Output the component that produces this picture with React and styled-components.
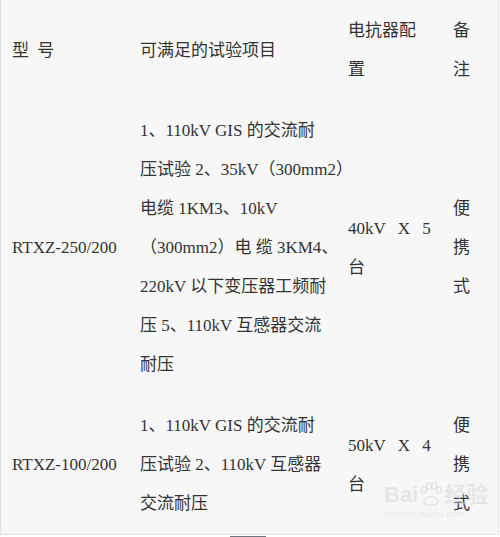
import React from "react";
import styled, { createGlobalStyle } from "styled-components";

const GlobalStyle = createGlobalStyle`
  html, body {
    margin: 0;
    padding: 0;
    background: #ffffff;
  }
`;

const Page = styled.div`
  width: 500px;
`;

const Panel = styled.div`
  position: relative;
  width: 497px;
  background: #f7f7f7;
  border-left: 1px solid #e2e2e2;
  border-right: 1px solid #e2e2e2;
  border-bottom: 1px solid #e2e2e2;
  font-family: "Liberation Serif", "Noto Sans CJK SC", serif;
  font-size: 17px;
  color: #333333;
`;

const Grid = styled.div`
  display: grid;
  grid-template-columns: 128px 208px 105px 56px;
  align-items: center;
`;

const Cell = styled.div`
  padding: 11px 0 11px 11px;
  line-height: 39px;
  white-space: nowrap;
`;

const Line = styled.span`
  display: block;
  word-spacing: ${(p) => p.$spread || 0}px;
`;

const Watermark = styled.div`
  position: absolute;
  left: 383px;
  top: 482px;
  display: flex;
  flex-direction: column;
  color: rgba(210, 210, 210, 0.45);
  font-family: "Liberation Sans", "Noto Sans CJK SC", sans-serif;
  pointer-events: none;
`;

const MarkTitle = styled.div`
  display: flex;
  align-items: flex-end;
  font-size: 22px;
  font-weight: bold;
  line-height: 26px;
`;

const MarkUrl = styled.div`
  font-size: 9px;
  line-height: 12px;
  letter-spacing: 0.5px;
`;

const Footer = styled.div`
  display: flex;
  justify-content: center;
  width: 496px;
`;

const Tab = styled.div`
  width: 36px;
  height: 4px;
  margin-top: 1px;
  background: #6d757a;
`;

const rows = [
  [
    ["型 号"],
    ["可满足的试验项目"],
    ["电抗器配", "置"],
    ["备", "注"],
  ],
  [
    ["RTXZ-250/200"],
    [
      "1、110kV GIS 的交流耐",
      "压试验 2、35kV（300mm2）",
      "电缆 1KM3、10kV",
      "（300mm2）电 缆 3KM4、",
      "220kV 以下变压器工频耐",
      "压 5、110kV 互感器交流",
      "耐压",
    ],
    ["40kV X 5", "台"],
    ["便", "携", "式"],
  ],
  [
    ["RTXZ-100/200"],
    ["1、110kV GIS 的交流耐", "压试验 2、110kV 互感器", "交流耐压"],
    ["50kV X 4", "台"],
    ["便", "携", "式"],
  ],
];

const spreadFor = (text) => {
  if (/X \d$/.test(text)) return 8;
  if (text === "型 号") return 4;
  return 0;
};

export default function App() {
  return (
    <Page>
      <GlobalStyle />
      <Panel>
        <Grid>
          {rows.map((row, r) =>
            row.map((lines, c) => (
              <Cell key={`${r}-${c}`}>
                {lines.map((t, i) => (
                  <Line key={i} $spread={spreadFor(t)}>
                    {t}
                  </Line>
                ))}
              </Cell>
            ))
          )}
        </Grid>
        <Watermark>
          <MarkTitle>
            Bai
            <svg width="26" height="26" viewBox="0 0 26 26">
              <g fill="none" stroke="rgba(210,210,210,0.5)" strokeWidth="1.5">
                <ellipse cx="6" cy="8" rx="2.5" ry="3.2" />
                <ellipse cx="11" cy="4" rx="2.5" ry="3" />
                <ellipse cx="16" cy="4" rx="2.5" ry="3" />
                <ellipse cx="21" cy="8" rx="2.5" ry="3.2" />
                <path d="M6 20 C 6 13, 20 13, 20 20 C 20 24, 6 24, 6 20 Z" />
              </g>
            </svg>
            经验
          </MarkTitle>
          <MarkUrl>jingyan.baidu.com</MarkUrl>
        </Watermark>
      </Panel>
      <Footer>
        <Tab />
      </Footer>
    </Page>
  );
}
